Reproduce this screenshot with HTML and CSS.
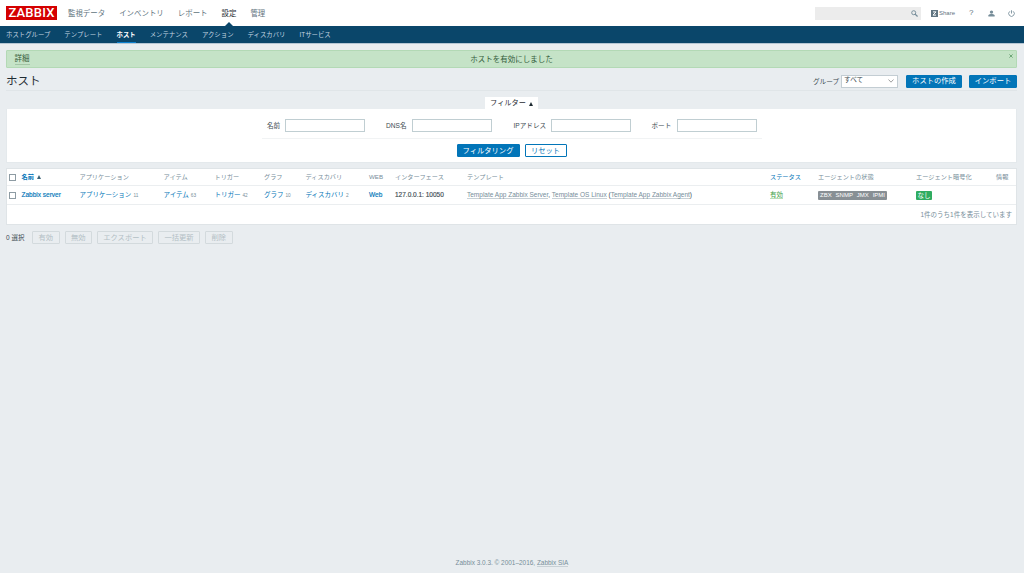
FILE: index.html
```
<!DOCTYPE html>
<html lang="ja">

<head>
	<meta charset="utf-8">
	<title>Zabbix: ホストの設定</title>
	<link rel="stylesheet" href="styles.css">
</head>

<body>
	<header class="top-nav">
		<a class="logo">ZABBIX</a>
		<ul class="main-menu">
			<li>監視データ</li>
			<li>インベントリ</li>
			<li>レポート</li>
			<li class="selected">設定</li>
			<li>管理</li>
		</ul>
		<div class="user-menu">
			<div class="search">
				<svg class="icon-search" viewBox="0 0 8 8"><circle cx="3.1" cy="3.1" r="2.3" fill="none" stroke="#768d99" stroke-width="1.1" /><path d="M4.7 4.7L7.5 7.5" stroke="#768d99" stroke-width="1.5" /></svg>
			</div>
			<a class="share">
				<svg class="icon-share" viewBox="0 0 7 7"><rect width="7" height="7" fill="#5f7480" /><path d="M2 1.9H5L2 5.1H5" fill="none" stroke="#fff" stroke-width="1" /></svg>
				<span>Share</span>
			</a>
			<a class="help">?</a>
			<svg class="icon-user" viewBox="0 0 8 8"><circle cx="4" cy="2.4" r="1.9" fill="#768d99" /><path d="M.4 7.5V6.2Q.6 5 3.1 4.7H4.9Q7.4 5 7.6 6.2V7.5Z" fill="#768d99" /></svg>
			<svg class="icon-power" viewBox="0 0 8 8"><path d="M2.1 1.5A3.2 3.2 0 1 0 5.9 1.5M4 .3V4" fill="none" stroke="#768d99" stroke-width="1" /></svg>
		</div>
	</header>
	<nav class="sub-nav">
		<a>ホストグループ</a>
		<a>テンプレート</a>
		<a class="selected">ホスト</a>
		<a>メンテナンス</a>
		<a>アクション</a>
		<a>ディスカバリ</a>
		<a>ITサービス</a>
	</nav>

	<main>
		<div class="msg-good">
			<a class="details">詳細</a>
			<span>ホストを有効にしました</span>
			<svg class="icon-close" viewBox="0 0 4 4"><path d="M.4 .4L3.6 3.6M3.6 .4L.4 3.6" stroke="#6fa678" stroke-width="1" /></svg>
		</div>

		<div class="header-title">
			<h1>ホスト</h1>
			<label>グループ</label>
			<div class="select">
				<span>すべて</span>
				<svg class="icon-arrow" viewBox="0 0 6 4"><path d="M.5 .5L3 3.2L5.5 .5" fill="none" stroke="#888" stroke-width=".8" /></svg>
			</div>
			<button class="btn btn-create">ホストの作成</button>
			<button class="btn btn-import">インポート</button>
		</div>

		<div class="filter-tab"><span>フィルター</span><i class="arrow-up"></i></div>
		<div class="filter">
			<div class="filter-fields">
				<label class="f-name">名前</label><input type="text">
				<label class="f-dns">DNS名</label><input type="text">
				<label class="f-ip">IPアドレス</label><input type="text">
				<label class="f-port">ポート</label><input type="text">
			</div>
			<div class="filter-buttons">
				<button class="btn btn-filter">フィルタリング</button>
				<button class="btn btn-alt">リセット</button>
			</div>
		</div>

		<table class="list-table">
			<colgroup>
				<col class="c-check"><col class="c-name"><col class="c-app"><col class="c-item"><col class="c-trigger"><col class="c-graph"><col class="c-disc"><col class="c-web"><col class="c-if"><col class="c-tpl"><col class="c-status"><col class="c-agent"><col class="c-enc"><col>
			</colgroup>
			<thead>
				<tr>
					<th><i class="checkbox"></i></th>
					<th class="sort"><b>名前</b><i class="arrow-up"></i></th>
					<th>アプリケーション</th>
					<th>アイテム</th>
					<th>トリガー</th>
					<th>グラフ</th>
					<th>ディスカバリ</th>
					<th>WEB</th>
					<th>インターフェース</th>
					<th>テンプレート</th>
					<th class="sort">ステータス</th>
					<th>エージェントの状態</th>
					<th>エージェント暗号化</th>
					<th>情報</th>
				</tr>
			</thead>
			<tbody>
				<tr>
					<td><i class="checkbox"></i></td>
					<td><a class="host">Zabbix server</a></td>
					<td><a>アプリケーション</a><sup>11</sup></td>
					<td><a>アイテム</a><sup>63</sup></td>
					<td><a>トリガー</a><sup>42</sup></td>
					<td><a>グラフ</a><sup>10</sup></td>
					<td><a>ディスカバリ</a><sup>2</sup></td>
					<td><a class="web">Web</a></td>
					<td class="interface">127.0.0.1: 10050</td>
					<td class="templates"><u>Template App Zabbix Server</u>, <u>Template OS Linux</u> (<u>Template App Zabbix Agent</u>)</td>
					<td><a class="enabled">有効</a></td>
					<td><div class="agents"><span>ZBX</span><span>SNMP</span><span>JMX</span><span>IPMI</span></div></td>
					<td><span class="encryption">なし</span></td>
					<td></td>
				</tr>
				<tr class="stats">
					<td colspan="14">1件のうち1件を表示しています</td>
				</tr>
			</tbody>
		</table>

		<div class="action-buttons">
			<span class="count">0 選択</span>
			<button class="btn w-27" disabled>有効</button>
			<button class="btn w-27" disabled>無効</button>
			<button class="btn w-56" disabled>エクスポート</button>
			<button class="btn w-42" disabled>一括更新</button>
			<button class="btn w-27" disabled>削除</button>
		</div>
	</main>

	<footer>Zabbix 3.0.3. © 2001–2016, <u>Zabbix SIA</u></footer>
</body>

</html>
```

FILE: styles.css
```
* {
	box-sizing: border-box;
}

body {
	margin: 0;
	height: 573px;
	display: flex;
	flex-direction: column;
	overflow: hidden;
	background-color: #e9edf0;
	color: #3c4a51;
	font-family: "Liberation Sans", "Noto Sans CJK JP", sans-serif;
	font-size: 6.6px;
	line-height: 10px;
	white-space: nowrap;
}

.top-nav {
	display: flex;
	align-items: center;
	height: 26px;
	flex: none;
	padding: 0 9px 0 6px;
	background-color: #fff;
	color: #5f7480;
}

.logo {
	width: 51px;
	height: 14px;
	background-color: #d40000;
	color: #fff;
	font-family: Roboto, sans-serif;
	font-size: 13px;
	font-weight: 500;
	line-height: 14.5px;
	letter-spacing: .2px;
	text-align: center;
}

.main-menu {
	display: flex;
	gap: 14px;
	height: 26px;
	margin: 0;
	padding: 0 0 0 11px;
	list-style: none;
	font-size: 7.45px;
	line-height: 27px;
}

.main-menu .selected {
	position: relative;
	color: #1f2c33;
}

.main-menu .selected::after {
	content: "";
	position: absolute;
	left: 3px;
	bottom: 0;
	border: 4.5px solid transparent;
	border-top: 0;
	border-bottom: 4px solid #0a466a;
}

.user-menu {
	display: flex;
	align-items: center;
	margin-left: auto;
}

.search {
	display: flex;
	align-items: center;
	justify-content: flex-end;
	width: 106px;
	height: 13px;
	padding-right: 3px;
	background-color: #ececec;
}

.icon-search,
.icon-user,
.icon-power {
	width: 7px;
	height: 7px;
}

.share {
	display: flex;
	align-items: center;
	gap: 1px;
	width: 24px;
	margin-left: 10px;
	font-size: 6px;
}

.icon-share {
	width: 7px;
	height: 7px;
}

.help {
	margin-left: 14px;
	width: 5px;
	font-size: 8px;
}

.icon-user {
	margin-left: 14px;
}

.icon-power {
	margin-left: 13px;
}

.sub-nav {
	display: flex;
	gap: 14px;
	height: 18px;
	flex: none;
	padding-left: 6px;
	background-color: #0a466a;
	border-bottom: 1px solid #b5c6d3;
	color: #c3d5e0;
	font-size: 6.4px;
	line-height: 17px;
}

.sub-nav .selected {
	height: 17px;
	border-bottom: 1.5px solid #0b80ce;
	color: #fff;
	font-weight: bold;
}

main {
	padding: 6px 7px 0 6px;
}

.msg-good {
	position: relative;
	height: 18px;
	border: 1px solid #b3d9b5;
	border-radius: 1px;
	background-color: #c5e3c7;
	color: #345c3b;
	font-size: 7.5px;
	line-height: 17px;
	text-align: center;
}

.details {
	position: absolute;
	left: 7.5px;
	top: 3px;
	height: 11px;
	border-bottom: 1px solid #a3c5a6;
	line-height: 10px;
}

.icon-close {
	position: absolute;
	right: 3px;
	top: 3px;
	width: 4px;
	height: 4px;
}

.header-title {
	display: flex;
	align-items: center;
	height: 23px;
	padding-top: 4px;
	border-bottom: 1px solid #e0e5e8;
}

.header-title h1 {
	margin: 0 auto 0 0;
	padding-bottom: 1px;
	color: #1f2c33;
	font-size: 11.5px;
	font-weight: normal;
}

.header-title label {
	padding-top: 1px;
}

.select {
	display: flex;
	align-items: center;
	justify-content: space-between;
	width: 57px;
	height: 13px;
	margin: 0 8px 0 2px;
	padding: 0 3px 0 2px;
	border: 1px solid #c3cdd3;
	background-color: #fff;
}

.select span {
	padding-bottom: 3px;
}

.icon-arrow {
	width: 6px;
	height: 4px;
}

.btn {
	flex: none;
	height: 13px;
	padding: 0;
	border: 1px solid #0275b8;
	border-radius: 1px;
	background-color: #0275b8;
	color: #fff;
	font: inherit;
	font-size: 7.3px;
	line-height: 10px;
}

.btn-create {
	width: 56px;
	margin-right: 7px;
}

.btn-import {
	width: 48px;
}

.filter-tab {
	display: flex;
	align-items: center;
	justify-content: center;
	width: 53px;
	height: 12px;
	margin: 6px auto 0;
	background-color: #fff;
	color: #1f2c33;
	font-size: 7.2px;
}

.arrow-up {
	display: inline-block;
	margin-left: 3px;
	border: 2px solid transparent;
	border-top: 0;
	border-bottom: 4px solid currentColor;
}

.filter-tab .arrow-up {
	margin-top: 2px;
	border-width: 0 2.5px 4px;
}

.filter {
	height: 54px;
	padding-top: 10px;
	border: 1px solid #e4e9ec;
	border-top: 0;
	background-color: #fff;
}

.filter-fields {
	display: flex;
	align-items: center;
	width: 500px;
	height: 20px;
	margin: 0 auto;
	padding: 0 0 6px 5.5px;
	border-bottom: 1px solid #f1f3f4;
}

.filter-fields label {
	flex: none;
}

.filter-fields input {
	flex: none;
	width: 80px;
	height: 13px;
	border: 1px solid #c0ced2;
	padding: 0;
}

.f-name {
	width: 18px;
}

.f-dns {
	width: 26px;
	margin-left: 21px;
}

.f-ip {
	width: 37px;
	margin-left: 21.5px;
}

.f-port {
	width: 25px;
	margin-left: 21px;
}

.filter-buttons {
	display: flex;
	justify-content: center;
	gap: 5px;
	padding-top: 5px;
}

.btn-filter {
	width: 63px;
}

.btn-alt {
	width: 42px;
	background-color: #fff;
	color: #0275b8;
}

.list-table {
	width: 1011px;
	margin-top: 5px;
	border: 1px solid #dfe4e7;
	border-collapse: separate;
	border-spacing: 0;
	table-layout: fixed;
	background-color: #fff;
}

.list-table th,
.list-table td {
	padding: 0;
	overflow: visible;
	border-bottom: 1px solid #ebeef0;
	text-align: left;
	vertical-align: middle;
	font-weight: normal;
}

.list-table th {
	height: 17px;
	color: #768d99;
	font-size: 6.2px;
}

.list-table td {
	height: 19px;
	font-size: 6.5px;
}

.list-table a,
.list-table .sort {
	color: #0275b8;
}

.list-table .sort .arrow-up {
	color: #3c6478;
}

.c-check { width: 14.5px; }
.c-name { width: 58px; }
.c-app { width: 84px; }
.c-item { width: 51px; }
.c-trigger { width: 49.5px; }
.c-graph { width: 41.5px; }
.c-disc { width: 63.5px; }
.c-web { width: 26px; }
.c-if { width: 72px; }
.c-tpl { width: 303px; }
.c-status { width: 48px; }
.c-agent { width: 98px; }
.c-enc { width: 80px; }

.checkbox {
	display: block;
	width: 7px;
	height: 7px;
	margin-left: 2px;
	border: 1px solid #8d9ba3;
	background-color: #fff;
}

.host,
.web,
.interface {
	-webkit-text-stroke: .15px currentColor;
}

.list-table sup {
	margin-left: 2px;
	color: #768d99;
	font-size: 4.7px;
	line-height: 1;
	vertical-align: baseline;
}

.templates u,
footer u {
	border-bottom: 1px solid #c8d1d6;
	color: #768d99;
	text-decoration: none;
}

.list-table .enabled {
	border-bottom: 1px solid #b9dfb8;
	color: #429e47;
}

.agents {
	display: flex;
	justify-content: space-between;
	width: 69px;
	height: 9px;
	padding: 0 2px;
	border-radius: 1px;
	background-color: #888f94;
	color: #fff;
	font-size: 6px;
	line-height: 9.5px;
}

.encryption {
	display: block;
	width: 16px;
	height: 9px;
	border-radius: 1px;
	background-color: #2fac60;
	color: #fff;
	line-height: 9px;
	text-align: center;
}

.list-table .stats td {
	height: 19px;
	padding-right: 4px;
	border-bottom: 0;
	color: #768d99;
	text-align: right;
}

.action-buttons {
	display: flex;
	align-items: center;
	gap: 5px;
	padding-top: 6px;
}

.count {
	width: 21px;
	font-size: 6.5px;
}

.action-buttons .btn {
	border-color: #d3dadd;
	background-color: transparent;
	color: #b3bfc5;
}

.w-27 { width: 27.5px; }
.w-42 { width: 42px; }
.w-56 { width: 56px; }

footer {
	margin: auto 0 5px;
	color: #768d99;
	font-size: 6.45px;
	text-align: center;
}
```
